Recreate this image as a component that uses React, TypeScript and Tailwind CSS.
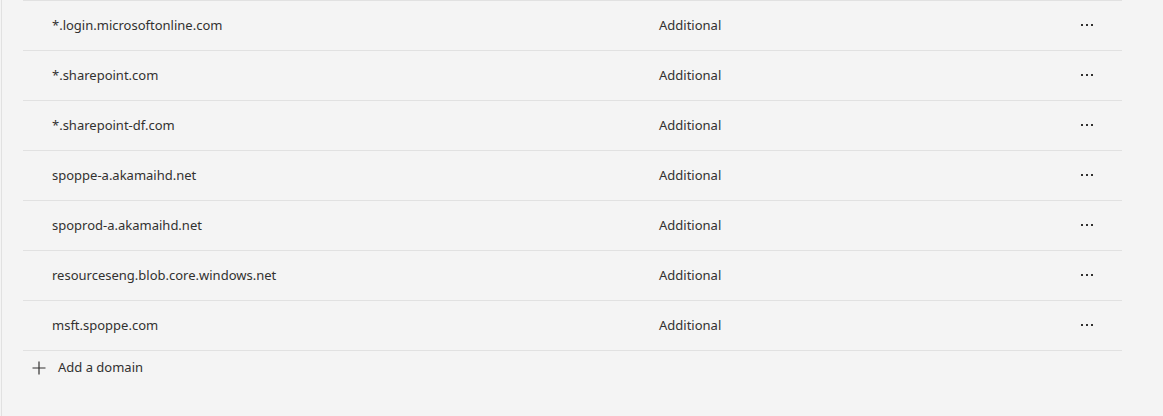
const domains = [
  '*.login.microsoftonline.com',
  '*.sharepoint.com',
  '*.sharepoint-df.com',
  'spoppe-a.akamaihd.net',
  'spoprod-a.akamaihd.net',
  'resourceseng.blob.core.windows.net',
  'msft.spoppe.com',
];

const MoreIcon = () => (
  <svg width="12" height="2" viewBox="0 0 12 2" className="block">
    <rect x="0" y="0" width="2" height="2" fill="#323130" />
    <rect x="5" y="0" width="2" height="2" fill="#323130" />
    <rect x="10" y="0" width="2" height="2" fill="#323130" />
  </svg>
);

export default function App() {
  return (
    <div
      className="h-[416px] w-full bg-[#f4f4f4] pl-px text-[13px] text-[#323130]"
      style={{ fontFamily: '"Segoe UI", "Noto Sans", sans-serif' }}
    >
      <div className="h-full border-l border-[#e1e1e1] pl-[21px] pr-[41px]">
        <div className="border-t border-[#e1e1e1]">
          {domains.map((d) => (
            <div
              key={d}
              className="flex h-[50px] items-center border-b border-[#e1e1e1] pl-[29px] pr-[29px] pt-px"
            >
              <div className="w-[607px] shrink-0">{d}</div>
              <div className="flex-1">Additional</div>
              <div className="flex h-[20px] w-[12px] items-center justify-center pb-[2px]">
                <MoreIcon />
              </div>
            </div>
          ))}
        </div>
        <button className="flex h-[34px] items-center gap-[12px] pl-[9px] text-[#323130]">
          <svg width="14" height="14" viewBox="0 0 14 14">
            <path d="M7 0.5V13.5M0.5 7H13.5" stroke="#323130" strokeWidth="1.2" fill="none" />
          </svg>
          <span>Add a domain</span>
        </button>
      </div>
    </div>
  );
}
